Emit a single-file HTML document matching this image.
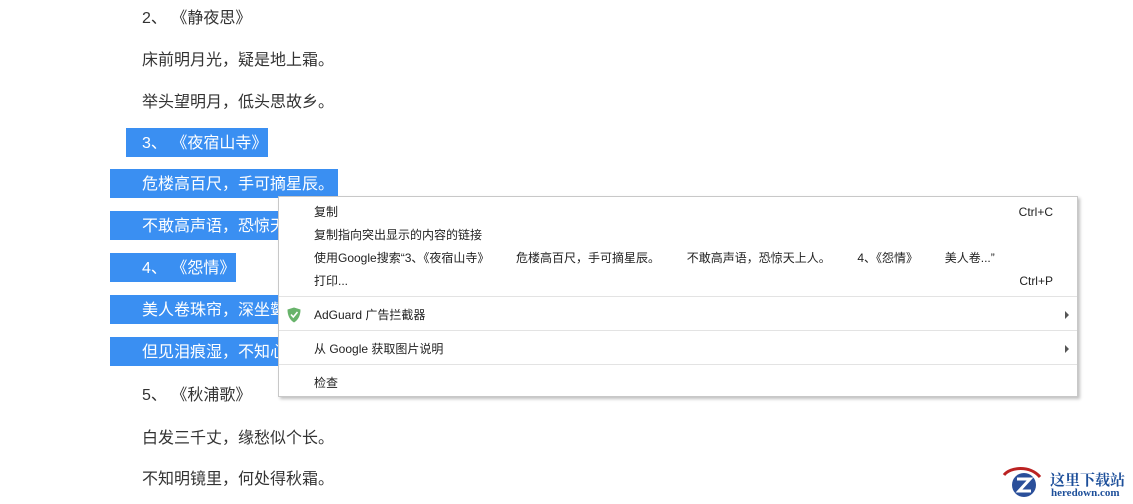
<!DOCTYPE html>
<html><head><meta charset="utf-8"><style>
body{margin:0;width:1133px;height:504px;background:#fff;position:relative;overflow:hidden;font-family:"Liberation Sans","Noto Sans CJK SC",sans-serif;}
.l{position:absolute;left:142px;font-size:16px;color:#333;line-height:20px;white-space:nowrap}
.hl{position:absolute;background:#3a8ff2;}
.w{color:#fff}
.menu{position:absolute;left:278px;top:196px;width:798px;height:199px;background:#fff;border:1px solid #c8c8c8;box-shadow:2px 2px 3px rgba(0,0,0,.25);font-size:12px;color:#222}
.mi{position:absolute;left:35px;white-space:nowrap;line-height:14px}
.sc{position:absolute;right:24px;line-height:14px}
.sep{position:absolute;left:0;right:0;height:1px;background:#e3e3e3}
.ar{position:absolute;right:8px;width:0;height:0;border-left:4px solid #555;border-top:4px solid transparent;border-bottom:4px solid transparent}
</style></head><body>
<div class="l" style="top:9px">2、 《静夜思》</div>
<div class="l" style="top:51px">床前明月光，疑是地上霜。</div>
<div class="l" style="top:93px">举头望明月，低头思故乡。</div>
<div class="hl" style="left:126px;top:128px;width:142px;height:29px"></div>
<div class="l w" style="top:134px">3、 《夜宿山寺》</div>
<div class="hl" style="left:110px;top:169px;width:228px;height:29px"></div>
<div class="l w" style="top:175px">危楼高百尺，手可摘星辰。</div>
<div class="hl" style="left:110px;top:211px;width:230px;height:29px"></div>
<div class="l w" style="top:217px">不敢高声语，恐惊天上人。</div>
<div class="hl" style="left:110px;top:253px;width:126px;height:29px"></div>
<div class="l w" style="top:259px">4、 《怨情》</div>
<div class="hl" style="left:110px;top:295px;width:230px;height:29px"></div>
<div class="l w" style="top:301px">美人卷珠帘，深坐颦蛾眉。</div>
<div class="hl" style="left:110px;top:337px;width:230px;height:29px"></div>
<div class="l w" style="top:343px">但见泪痕湿，不知心恨谁。</div>
<div class="l" style="top:386px">5、 《秋浦歌》</div>
<div class="l" style="top:429px">白发三千丈，缘愁似个长。</div>
<div class="l" style="top:470px">不知明镜里，何处得秋霜。</div>
<div class="menu">
<div class="mi" style="top:8px">复制</div><div class="sc" style="top:8px">Ctrl+C</div>
<div class="mi" style="top:31px">复制指向突出显示的内容的链接</div>
<div class="mi" style="top:54px">使用Google搜索“3、《夜宿山寺》&nbsp;&nbsp;&nbsp;&nbsp;&nbsp;&nbsp;&nbsp;&nbsp;危楼高百尺，手可摘星辰。&nbsp;&nbsp;&nbsp;&nbsp;&nbsp;&nbsp;&nbsp;&nbsp;不敢高声语，恐惊天上人。&nbsp;&nbsp;&nbsp;&nbsp;&nbsp;&nbsp;&nbsp;&nbsp;4、《怨情》&nbsp;&nbsp;&nbsp;&nbsp;&nbsp;&nbsp;&nbsp;&nbsp;美人卷...”</div>
<div class="mi" style="top:77px">打印...</div><div class="sc" style="top:77px">Ctrl+P</div>
<div class="sep" style="top:99px"></div>
<svg style="position:absolute;left:8px;top:110px" width="14" height="16" viewBox="0 0 14 16"><path d="M7 0.5L13.5 2.5C13.5 9 11 13 7 15.5C3 13 0.5 9 0.5 2.5Z" fill="#68b36b"/><path d="M4 7.5L6.3 10L10.5 5" stroke="#fff" stroke-width="1.6" fill="none"/></svg>
<div class="mi" style="top:111px">AdGuard 广告拦截器</div><div class="ar" style="top:114px"></div>
<div class="sep" style="top:133px"></div>
<div class="mi" style="top:145px">从 Google 获取图片说明</div><div class="ar" style="top:148px"></div>
<div class="sep" style="top:167px"></div>
<div class="mi" style="top:179px">检查</div>
</div>
<svg style="position:absolute;left:1000px;top:465px" width="48" height="36" viewBox="0 0 48 36"><path d="M4 10C10 2 30 0 40 12" stroke="#b22" stroke-width="3" fill="none"/><circle cx="24" cy="20" r="12" fill="#2a4f9a"/><path d="M17 14H30L19 26H31" stroke="#fff" stroke-width="3" fill="none"/></svg>
<div style="position:absolute;left:1050px;top:469px;font-size:15px;font-weight:bold;color:#1d4f9a;font-family:'Liberation Serif','Noto Serif CJK SC',serif">这里下载站</div>
<div style="position:absolute;left:1051px;top:487px;font-size:11px;font-weight:bold;color:#1d4f9a;font-family:'Liberation Serif',serif">heredown.com</div>
</body></html>
